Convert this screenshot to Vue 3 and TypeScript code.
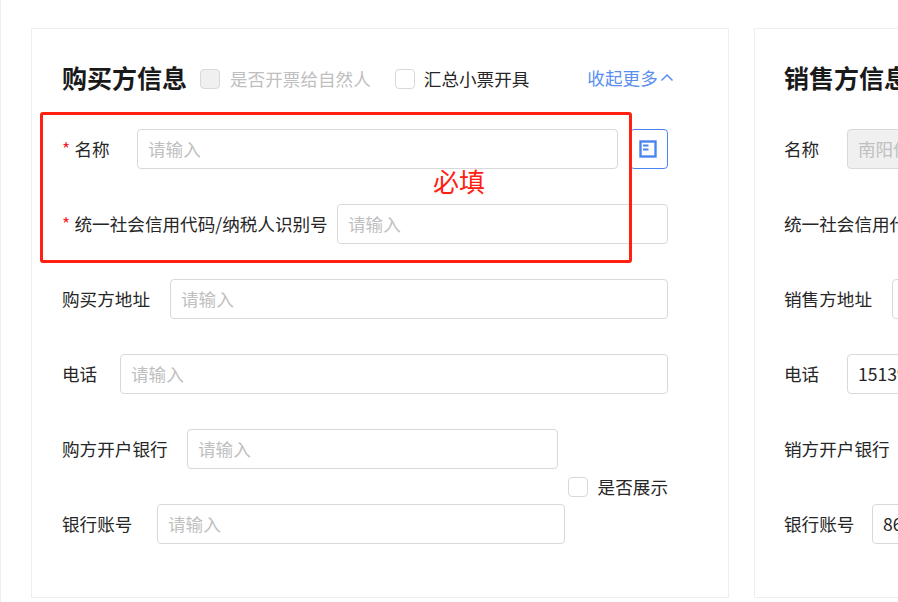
<script setup lang="ts">
interface Row {
  label: string
  width: number
  required?: boolean
  value?: string
  disabled?: boolean
  action?: boolean
}

const buyerTop: Row[] = [
  { label: '名称', width: 75, required: true, action: true },
  { label: '统一社会信用代码/纳税人识别号', width: 275, required: true },
  { label: '购买方地址', width: 108 },
  { label: '电话', width: 58 },
]
const sellerTop: Row[] = [
  { label: '名称', width: 63, value: '南阳供应链管理有限公司', disabled: true },
  { label: '统一社会信用代码/纳税人识别号', width: 275, value: '91411300MA40000000', disabled: true },
  { label: '销售方地址', width: 108, value: '河南省南阳市' },
  { label: '电话', width: 63, value: '15139000000' },
  { label: '销方开户银行', width: 125, value: '中国银行' },
  { label: '银行账号', width: 88, value: '8600000000' },
]
</script>

<template>
  <div class="page">
    <section class="panel">
      <header class="head">
        <h2 class="title">购买方信息</h2>
        <label class="check disabled first"><span class="box"></span>是否开票给自然人</label>
        <label class="check second"><span class="box"></span>汇总小票开具</label>
        <a class="more">收起更多
          <svg width="14" height="14" viewBox="0 0 14 14" fill="none" stroke="#5a8ff0" stroke-width="1.5">
            <path d="M1.5 9.5 7 4l5.500 5.500" />
          </svg>
        </a>
      </header>
      <div class="form">
        <div v-for="row in buyerTop" :key="row.label" class="row">
          <label class="label" :style="{ width: row.width + 'px' }">
            <span v-if="row.required" class="star">*</span>{{ row.label }}
          </label>
          <input class="input" placeholder="请输入" />
          <button v-if="row.action" class="icon-btn" type="button" aria-label="选择">
            <svg width="18" height="18" viewBox="0 0 18 18" fill="none" stroke="#4a86ee">
              <rect x="1.500" y="1.500" width="15" height="15" stroke-width="2.400" />
              <path d="M4 5.500h5.500M4 9.500h5.500" stroke-width="2" />
            </svg>
          </button>
        </div>
        <div class="bank">
          <div class="row short">
            <label class="label" style="width: 125px">购方开户银行</label>
            <input class="input" placeholder="请输入" />
          </div>
          <div class="show-row">
            <label class="check"><span class="box"></span>是否展示</label>
          </div>
          <div class="row shorter">
            <label class="label" style="width: 95px">银行账号</label>
            <input class="input" placeholder="请输入" />
          </div>
        </div>
      </div>
    </section>

    <section class="panel seller">
      <header class="head">
        <h2 class="title">销售方信息</h2>
      </header>
      <div class="form">
        <div v-for="row in sellerTop" :key="row.label" class="row">
          <label class="label" :style="{ width: row.width + 'px' }">{{ row.label }}</label>
          <input class="input" :value="row.value" :disabled="row.disabled" />
        </div>
      </div>
    </section>

    <div class="required-box"></div>
    <span class="required-text">必填</span>
  </div>
</template>

<style>
html,
body {
  margin: 0;
  background: #fff;
  overflow: hidden;
}
</style>

<style scoped>
.page {
  position: relative;
  box-sizing: border-box;
  width: 898px;
  height: 602px;
  padding: 28px 0 4px 31px;
  display: flex;
  gap: 25px;
  overflow: hidden;
  background: #fff;
  font-family: "Noto Sans CJK SC", "Noto Sans", sans-serif;
  font-size: 17.6px;
  color: #262626;
}
.page::before {
  content: "";
  position: absolute;
  inset: 0 auto 0 0;
  width: 1px;
  background: #eeeeee;
}
.panel {
  box-sizing: border-box;
  flex: 0 0 698px;
  min-width: 0;
  padding: 30px 60px 0 30px;
  border: 1px solid #eeeeee;
}
.seller {
  padding-left: 29px;
}
.head {
  height: 40px;
  margin-bottom: 30px;
  display: flex;
  align-items: center;
  white-space: nowrap;
}
.title {
  margin: 0 13px 3px 0;
  font-size: 25px;
  font-weight: 700;
  color: #1a1a1a;
  line-height: 37px;
}
.check {
  display: inline-flex;
  align-items: center;
  gap: 10px;
  line-height: 24px;
}
.check.first {
  margin-right: 24px;
}
.check.second {
  gap: 9px;
  margin-right: 58px;
}
.box {
  box-sizing: border-box;
  width: 20px;
  height: 20px;
  border: 1px solid #d9d9d9;
  border-radius: 4px;
  background: #fff;
}
.check.disabled {
  color: #bfbfbf;
}
.check.disabled .box {
  background: #f0f0f0;
}
.more {
  display: inline-flex;
  align-items: center;
  gap: 2px;
  padding-bottom: 3px;
  color: #5a8ff0;
}
.form {
  display: flex;
  flex-direction: column;
  gap: 35px;
}
.row {
  display: flex;
  align-items: center;
  height: 40px;
}
.label {
  flex: none;
  padding-bottom: 2px;
  box-sizing: border-box;
  white-space: nowrap;
  color: #262626;
}
.star {
  display: inline-block;
  width: 12.500px;
  color: #f5222d;
}
.input {
  box-sizing: border-box;
  flex: 1;
  min-width: 0;
  height: 40px;
  padding: 0 11px 2px 10px;
  border: 1px solid #d9d9d9;
  border-radius: 4px;
  background: #fff;
  outline: none;
  font: inherit;
  color: #262626;
}
.input::placeholder {
  color: #bfbfbf;
}
.input:disabled {
  background: #f0f0f0;
  color: #bfbfbf;
}
.icon-btn {
  box-sizing: border-box;
  flex: none;
  display: flex;
  align-items: center;
  justify-content: center;
  width: 38px;
  height: 40px;
  margin-left: 12px;
  padding: 0 2px 0 0;
  border: 1px solid #4a86ee;
  border-radius: 4px;
  background: #fff;
}
.short {
  margin-right: 110px;
}
.shorter {
  margin-right: 103px;
}
.show-row {
  display: flex;
  justify-content: flex-end;
  align-items: center;
  height: 35px;
  padding-top: 1px;
  box-sizing: border-box;
}
.required-box {
  position: absolute;
  left: 40px;
  top: 112px;
  box-sizing: border-box;
  width: 592px;
  height: 151px;
  border: 3px solid #ff2012;
  border-radius: 3px;
}
.required-text {
  position: absolute;
  left: 433px;
  top: 162px;
  font-size: 26px;
  line-height: 38px;
  color: #ff2012;
}
</style>
